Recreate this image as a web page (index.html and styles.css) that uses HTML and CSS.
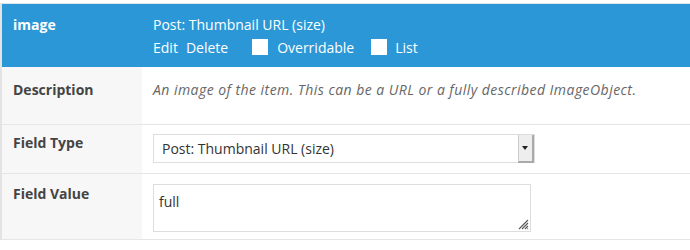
FILE: index.html
```html
<!DOCTYPE html>
<html>
<head>
<meta charset="utf-8">
<link rel="stylesheet" href="styles.css">
</head>
<body>
<div class="table">
  <div class="row head">
    <div class="label">image</div>
    <div class="value">
      <div class="type">Post: Thumbnail URL (size)</div>
      <div class="actions">
        <span class="act edit">Edit</span>
        <span class="act">Delete</span>
        <span class="chk first"></span><span class="act">Overridable</span>
        <span class="chk"></span><span class="act">List</span>
      </div>
    </div>
  </div>
  <div class="row desc">
    <div class="label">Description</div>
    <div class="value"><em>An image of the item. This can be a URL or a fully described ImageObject.</em></div>
  </div>
  <div class="row ftype">
    <div class="label">Field Type</div>
    <div class="value">
      <div class="select"><span class="seltext">Post: Thumbnail URL (size)</span><span class="arrow"></span></div>
    </div>
  </div>
  <div class="row fval">
    <div class="label">Field Value</div>
    <div class="value">
      <div class="textarea">full
        <svg class="grip" width="11" height="11" viewBox="0 0 11 11"><path d="M10 1L1 10M10 4L4 10M10 7L7 10M10 9.5L9.5 10" stroke="#555" stroke-width="1.1" fill="none"/></svg>
      </div>
    </div>
  </div>
</div>
</body>
</html>
```
FILE: styles.css
```css
html, body { margin: 0; padding: 0; background: #fff; }
body { font-family: "Open Sans", "Liberation Sans", sans-serif; font-size: 14px; color: #444; }
.table { margin-top: 3px; border-left: 2px solid #e3e3e3; border-top: 1px solid #dde7ee; }
.row { display: flex; border-bottom: 1px solid #e6e6e6; }
.label { width: 129px; flex: none; padding: 0 0 0 11px; background: #f7f7f7; font-weight: 700; color: #444; }
.value { flex: 1; padding-left: 11px; }
.head { background: #2b97d7; color: #fff; height: 63px; border-bottom: 0; }
.head .label { background: transparent; color: #fff; padding-top: 11px; }
.head .value { padding-top: 11px; }
.type { line-height: 19px; }
.actions { display: flex; align-items: center; height: 20px; margin-top: 3px; }
.edit { margin-right: 8px; }
.chk { width: 16px; height: 16px; background: #fff; margin-right: 8px; margin-left: 17px; }
.chk.first { margin-left: 24px; margin-right: 9px; }
.desc { height: 57px; }
.desc .label { padding-top: 13px; }
.desc .value { padding-top: 13px; color: #666; letter-spacing: 0.46px; }
.ftype { height: 48px; }
.ftype .label { padding-top: 8px; }
.ftype .value { padding-top: 9px; }
.select { width: 382px; height: 29px; border: 1px solid #ddd; display: flex; align-items: center; box-sizing: border-box; position: relative; }
.seltext { padding-left: 8px; flex: 1; color: #333; }
.arrow { width: 16px; height: 28px; background: #eee; border-left: 1px solid #ccc; border-right: 2px solid #aaa; border-bottom: 2px solid #aaa; box-sizing: border-box; position: relative; }
.arrow::after { content: ""; position: absolute; left: 3px; top: 11px; border-left: 3px solid transparent; border-right: 3px solid transparent; border-top: 4px solid #222; }
.fval { height: 65px; }
.fval .label { padding-top: 10px; }
.fval .value { padding-top: 10px; }
.textarea { width: 378px; height: 48px; border: 1px solid #ddd; box-sizing: border-box; padding: 7px 5px; color: #333; position: relative; }
.grip { position: absolute; right: 1px; bottom: 1px; }
```
